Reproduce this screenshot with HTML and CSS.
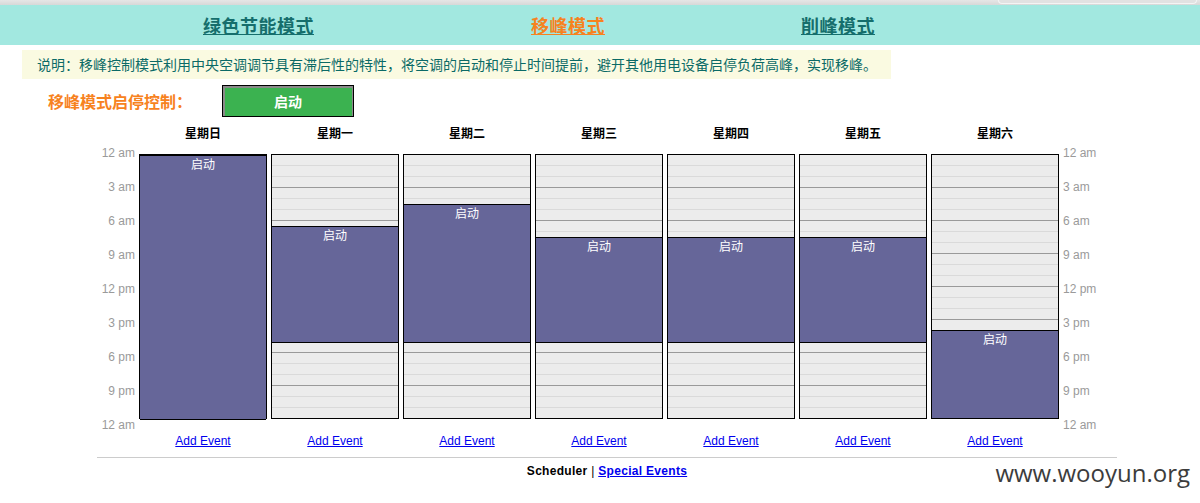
FILE: index.html
```html
<!DOCTYPE html>
<html lang="zh-CN">
<head>
<meta charset="utf-8">
<title>移峰模式</title>
<link rel="stylesheet" href="styles.css">
</head>
<body>
<div class="topbar"><span class="pill"></span></div>
<nav class="modes">
  <a class="mode m1" href="#">绿色节能模式</a>
  <a class="mode m2 active" href="#">移峰模式</a>
  <a class="mode m3" href="#">削峰模式</a>
</nav>
<div class="desc">说明：移峰控制模式利用中央空调调节具有滞后性的特性，将空调的启动和停止时间提前，避开其他用电设备启停负荷高峰，实现移峰。</div>
<div class="control">
  <span class="ctl-label">移峰模式启停控制：</span>
  <button class="start-btn" type="button">启动</button>
</div>
<div class="cal">
  <div class="spacer"></div>
  <div class="dayname">星期日</div>
  <div class="dayname">星期一</div>
  <div class="dayname">星期二</div>
  <div class="dayname">星期三</div>
  <div class="dayname">星期四</div>
  <div class="dayname">星期五</div>
  <div class="dayname">星期六</div>
  <div class="spacer"></div>

  <div class="times left">
    <span>12 am</span><span>3 am</span><span>6 am</span><span>9 am</span><span>12 pm</span><span>3 pm</span><span>6 pm</span><span>9 pm</span><span>12 am</span>
  </div>
  <div class="day"><div class="event" style="top:0;height:265px">启动</div></div>
  <div class="day"><div class="event" style="top:71px;height:117px">启动</div></div>
  <div class="day"><div class="event" style="top:49px;height:139px">启动</div></div>
  <div class="day"><div class="event" style="top:82px;height:106px">启动</div></div>
  <div class="day"><div class="event" style="top:82px;height:106px">启动</div></div>
  <div class="day"><div class="event" style="top:82px;height:106px">启动</div></div>
  <div class="day"><div class="event" style="top:175px;height:89px">启动</div></div>
  <div class="times right">
    <span>12 am</span><span>3 am</span><span>6 am</span><span>9 am</span><span>12 pm</span><span>3 pm</span><span>6 pm</span><span>9 pm</span><span>12 am</span>
  </div>

  <div class="spacer"></div>
  <div class="add"><a href="#">Add Event</a></div>
  <div class="add"><a href="#">Add Event</a></div>
  <div class="add"><a href="#">Add Event</a></div>
  <div class="add"><a href="#">Add Event</a></div>
  <div class="add"><a href="#">Add Event</a></div>
  <div class="add"><a href="#">Add Event</a></div>
  <div class="add"><a href="#">Add Event</a></div>
  <div class="spacer"></div>
</div>
<div class="footer"><b>Scheduler</b> | <a href="#">Special Events</a></div>
<div class="watermark">www.wooyun.org</div>
</body>
</html>
```
FILE: styles.css
```css
html, body {
  margin: 0;
  padding: 0;
  background: #ffffff;
}
body {
  position: relative;
  width: 1200px;
  height: 503px;
  overflow: hidden;
  font-family: "Liberation Sans", "Noto Sans CJK SC", sans-serif;
}
.topbar {
  height: 5px;
  background: linear-gradient(#e6e6e6, #d8d8d8);
  display: flex;
  justify-content: flex-end;
}
.pill {
  width: 197px;
  height: 3px;
  margin-right: 3px;
  border: 1px solid #f4f4f4;
  border-top: none;
  border-radius: 0 0 4px 4px;
  background: #e2e2e2;
}
.modes {
  height: 40px;
  background: #a2e8e0;
  display: flex;
  align-items: center;
  padding-left: 203px;
  font-family: "Noto Sans CJK SC", sans-serif;
}
.mode {
  font-size: 18px;
  font-weight: bold;
  line-height: 22px;
  letter-spacing: 0.5px;
  color: #156e6c;
  text-decoration: underline;
}
.mode.active { color: #f7821e; }
.m2 { margin-left: 217px; }
.m3 { margin-left: 196px; }
.desc {
  margin: 5px 0 0 22px;
  width: 854px;
  height: 29px;
  padding-left: 15px;
  background: #fafae1;
  color: #0b6a66;
  font-family: "Noto Sans CJK SC", sans-serif;
  font-size: 14px;
  line-height: 29px;
  white-space: nowrap;
}
.control {
  display: flex;
  align-items: center;
  margin-top: 6px;
  padding-left: 48px;
  height: 32px;
}
.ctl-label {
  width: 174px;
  font-family: "Noto Sans CJK SC", sans-serif;
  font-size: 16px;
  font-weight: bold;
  color: #f7821e;
}
.start-btn {
  width: 132px;
  height: 32px;
  padding: 0;
  margin: 0;
  border: 1px solid #000;
  background: #3bb250;
  box-shadow: inset 2px 2px 0 #8a8a8a, inset -1px 0 0 #8a8a8a;
  color: #fff;
  font-family: "Noto Sans CJK SC", sans-serif;
  font-size: 14px;
  font-weight: bold;
}
.cal {
  margin-left: 97px;
  width: 1020px;
  display: grid;
  grid-template-columns: 38px repeat(7, 128px) 54px;
  column-gap: 4px;
}
.dayname {
  padding: 9px 0 14px;
  text-align: center;
  font-family: "Noto Sans CJK SC", sans-serif;
  font-size: 12px;
  font-weight: bold;
  line-height: 14px;
  color: #000;
}
.times {
  height: 265px;
  display: flex;
  flex-direction: column;
  font-size: 12px;
  color: #9a9a9a;
}
.times span {
  display: block;
  height: 34px;
  line-height: 14px;
  flex: none;
}
.times span:first-child { margin-top: -8px; }
.times.left { text-align: right; }
.times.right { text-align: left; }
.day {
  position: relative;
  height: 263px;
  border: 1px solid #000;
  background-color: #ececec;
  background-image:
    repeating-linear-gradient(to bottom, transparent 0 32px, #9a9a9a 32px 33px),
    repeating-linear-gradient(to bottom, transparent 0 10px, #dadada 10px 11px);
}
.event {
  position: absolute;
  left: 0;
  right: 0;
  box-sizing: border-box;
  border-top: 1px solid #000;
  border-bottom: 1px solid #000;
  background: #666699;
  color: #fff;
  text-align: center;
  font-family: "Noto Sans CJK SC", sans-serif;
  font-size: 12px;
  line-height: 14px;
  padding-top: 1px;
}
.add {
  padding-top: 15px;
  text-align: center;
  font-size: 12px;
  line-height: 14px;
}
.add a { color: #0000ee; }
.footer {
  margin: 9px 0 0 97px;
  width: 1020px;
  border-top: 1px solid #cccccc;
  padding-top: 6px;
  text-align: center;
  font-size: 12px;
  line-height: 14px;
  letter-spacing: 0.3px;
  color: #000;
}
.footer a {
  color: #0000ee;
  font-weight: bold;
}
.watermark {
  position: absolute;
  right: 10px;
  top: 458px;
  font-family: "Open Sans", sans-serif;
  font-size: 24px;
  line-height: 30px;
  color: #3c3c3c;
}
```
